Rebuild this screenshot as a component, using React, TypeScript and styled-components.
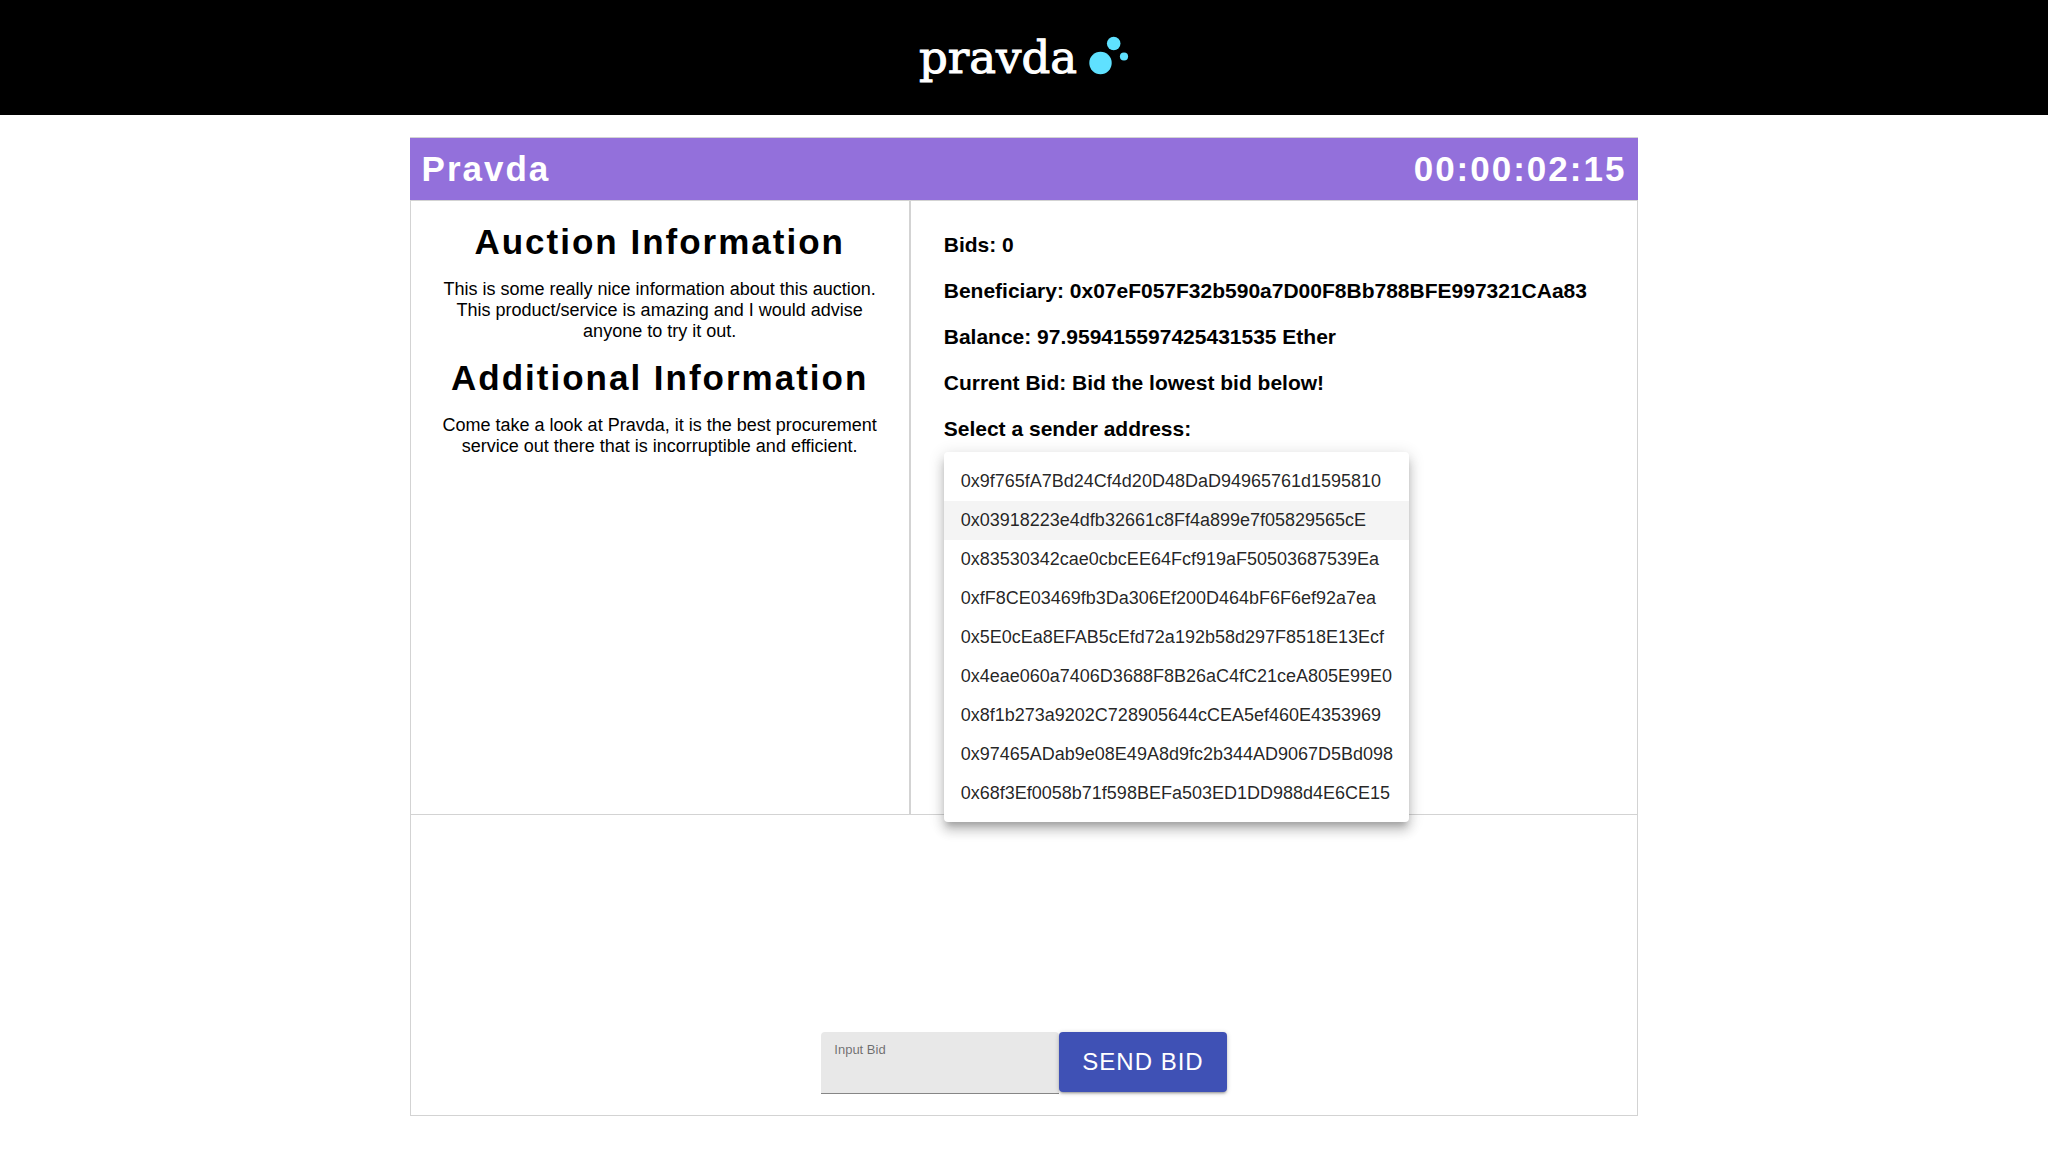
import React, { useState } from "react";
import styled, { createGlobalStyle } from "styled-components";

const GlobalStyle = createGlobalStyle`
  *, *::before, *::after { box-sizing: border-box; }
  body {
    margin: 0;
    background: #fff;
    color: #000;
    font: 18px/21px "Liberation Sans", Arial, sans-serif;
  }
  h1, h2, h3, p, ul { margin: 0; padding: 0; }
`;

const Header = styled.header`
  display: flex;
  justify-content: center;
  align-items: center;
  gap: 12px;
  height: 115px;
  background: #000;
`;

const Wordmark = styled.span`
  color: #fff;
  font: 45px/52px "DejaVu Serif", serif;
  -webkit-text-stroke: 1px #fff;
`;

const Dots = styled.svg`
  display: block;
  margin-bottom: 4px;
`;

const Card = styled.main`
  display: flex;
  flex-direction: column;
  width: 60%;
  min-height: 85vh;
  margin: 22px auto 0;
`;

const TitleBar = styled.div`
  display: flex;
  justify-content: space-between;
  align-items: center;
  height: 64px;
  padding: 0 12px;
  background: #9370db;
  border: solid #d3d3d3;
  border-width: 1px 0;
  color: #fff;
`;

const Title = styled.h1`
  font-size: 35px;
  line-height: 40px;
  letter-spacing: 2px;
`;

const Heading = styled.h2`
  padding-bottom: 1px;
  font-size: 35px;
  line-height: 40px;
  letter-spacing: 2px;
`;

const Timer = styled.time`
  font-size: 35px;
  font-weight: bold;
  line-height: 40px;
  letter-spacing: 2px;
`;

const Panes = styled.div`
  display: grid;
  grid-template-columns: 53fr 77fr;
  flex: 11 1 0px;
  border: solid #d3d3d3;
  border-width: 0 1px;
`;

const Information = styled.section`
  display: flex;
  flex-direction: column;
  gap: 16px;
  padding: 21px 28px;
  border-right: 2px solid #d3d3d3;
  text-align: center;
`;

const Details = styled.section`
  display: flex;
  flex-direction: column;
  gap: 22px;
  padding: 32px 33px;
`;

const Detail = styled.h3`
  font-size: 21px;
  line-height: 24px;
`;

const Picker = styled.div`
  position: relative;
  align-self: flex-start;
  margin-top: -11px;
`;

const Trigger = styled.button`
  display: block;
  width: 132px;
  height: 35px;
  border: 0;
  border-bottom: 1px solid #949494;
  background: none;
  font: inherit;
  text-align: left;
  overflow: hidden;
  text-overflow: ellipsis;
`;

const Menu = styled.ul`
  position: absolute;
  top: 0;
  left: 0;
  z-index: 1;
  padding: 10px 0 9px;
  list-style: none;
  background: #fff;
  border-radius: 4px;
  box-shadow:
    0 6px 6px -3px rgba(0, 0, 0, 0.2),
    0 9px 11px 1px rgba(0, 0, 0, 0.14),
    0 3px 15px 2px rgba(0, 0, 0, 0.12);
`;

const Option = styled.button<{ $active: boolean }>`
  display: block;
  width: 100%;
  height: 39px;
  padding: 0 16px 0 17px;
  border: 0;
  outline: 0;
  background: ${(p) => (p.$active ? "#f4f4f4" : "transparent")};
  color: rgba(0, 0, 0, 0.87);
  font: inherit;
  text-align: left;
  white-space: nowrap;
  cursor: pointer;
`;

const BidForm = styled.form`
  display: flex;
  flex: 5 1 0px;
  justify-content: center;
  align-items: flex-end;
  padding-bottom: 21px;
  border: 1px solid #d3d3d3;
`;

const BidRow = styled.div`
  display: flex;
  align-items: flex-start;
`;

const Field = styled.div`
  display: flex;
  flex-direction: column;
  width: 238px;
  height: 62px;
  padding: 10px 13px 0;
  background: #e8e8e8;
  border-bottom: 1px solid #868686;
  border-radius: 4px 4px 0 0;
`;

const FieldLabel = styled.label`
  color: rgba(0, 0, 0, 0.54);
  font-size: 13px;
  line-height: 15px;
`;

const FieldInput = styled.input`
  flex: 1;
  width: 100%;
  min-height: 0;
  padding: 0;
  border: 0;
  outline: 0;
  background: none;
  font: inherit;
`;

const SendButton = styled.button`
  height: 60px;
  padding: 0 23px;
  border: 0;
  border-radius: 4px;
  background: #3f51b5;
  box-shadow:
    0 1px 5px rgba(0, 0, 0, 0.2),
    0 2px 2px rgba(0, 0, 0, 0.14),
    0 3px 1px -2px rgba(0, 0, 0, 0.12);
  color: #fff;
  font: 24px/28px "Liberation Sans", Arial, sans-serif;
  letter-spacing: 1px;
  text-transform: uppercase;
  cursor: pointer;
`;

const addresses = [
  "0x9f765fA7Bd24Cf4d20D48DaD94965761d1595810",
  "0x03918223e4dfb32661c8Ff4a899e7f05829565cE",
  "0x83530342cae0cbcEE64Fcf919aF50503687539Ea",
  "0xfF8CE03469fb3Da306Ef200D464bF6F6ef92a7ea",
  "0x5E0cEa8EFAB5cEfd72a192b58d297F8518E13Ecf",
  "0x4eae060a7406D3688F8B26aC4fC21ceA805E99E0",
  "0x8f1b273a9202C728905644cCEA5ef460E4353969",
  "0x97465ADab9e08E49A8d9fc2b344AD9067D5Bd098",
  "0x68f3Ef0058b71f598BEFa503ED1DD988d4E6CE15",
];

function AddressPicker() {
  const [open, setOpen] = useState(true);
  const [active, setActive] = useState(1);
  const [selected, setSelected] = useState("");

  return (
    <Picker>
      <Trigger
        type="button"
        aria-labelledby="sender-label"
        aria-haspopup="listbox"
        aria-expanded={open}
        onClick={() => setOpen(true)}
      >
        {selected}
      </Trigger>
      {open && (
        <Menu role="listbox" aria-labelledby="sender-label">
          {addresses.map((address, i) => (
            <li key={address} role="presentation">
              <Option
                type="button"
                role="option"
                aria-selected={address === selected}
                $active={i === active}
                onMouseEnter={() => setActive(i)}
                onClick={() => {
                  setSelected(address);
                  setOpen(false);
                }}
              >
                {address}
              </Option>
            </li>
          ))}
        </Menu>
      )}
    </Picker>
  );
}

export default function App() {
  const [bid, setBid] = useState("");

  return (
    <>
      <GlobalStyle />
      <Header>
        <Wordmark>pravda</Wordmark>
        <Dots width="40" height="40" viewBox="0 0 40 40" fill="#5fe1ff" aria-hidden="true">
          <circle cx="11.5" cy="27" r="11.2" />
          <circle cx="24.7" cy="7.5" r="6.8" />
          <circle cx="35" cy="20.5" r="4.1" />
        </Dots>
      </Header>
      <Card>
        <TitleBar>
          <Title>Pravda</Title>
          <Timer>00:00:02:15</Timer>
        </TitleBar>
        <Panes>
          <Information>
            <Heading>Auction Information</Heading>
            <p>
              This is some really nice information about this auction. This product/service is
              amazing and I would advise anyone to try it out.
            </p>
            <Heading>Additional Information</Heading>
            <p>
              Come take a look at Pravda, it is the best procurement service out there that is
              incorruptible and efficient.
            </p>
          </Information>
          <Details>
            <Detail>Bids: 0</Detail>
            <Detail>Beneficiary: 0x07eF057F32b590a7D00F8Bb788BFE997321CAa83</Detail>
            <Detail>Balance: 97.959415597425431535 Ether</Detail>
            <Detail>Current Bid: Bid the lowest bid below!</Detail>
            <Detail id="sender-label">Select a sender address:</Detail>
            <AddressPicker />
          </Details>
        </Panes>
        <BidForm onSubmit={(e) => e.preventDefault()}>
          <BidRow>
            <Field>
              <FieldLabel htmlFor="bid">Input Bid</FieldLabel>
              <FieldInput id="bid" value={bid} onChange={(e) => setBid(e.target.value)} />
            </Field>
            <SendButton type="submit">Send Bid</SendButton>
          </BidRow>
        </BidForm>
      </Card>
    </>
  );
}
